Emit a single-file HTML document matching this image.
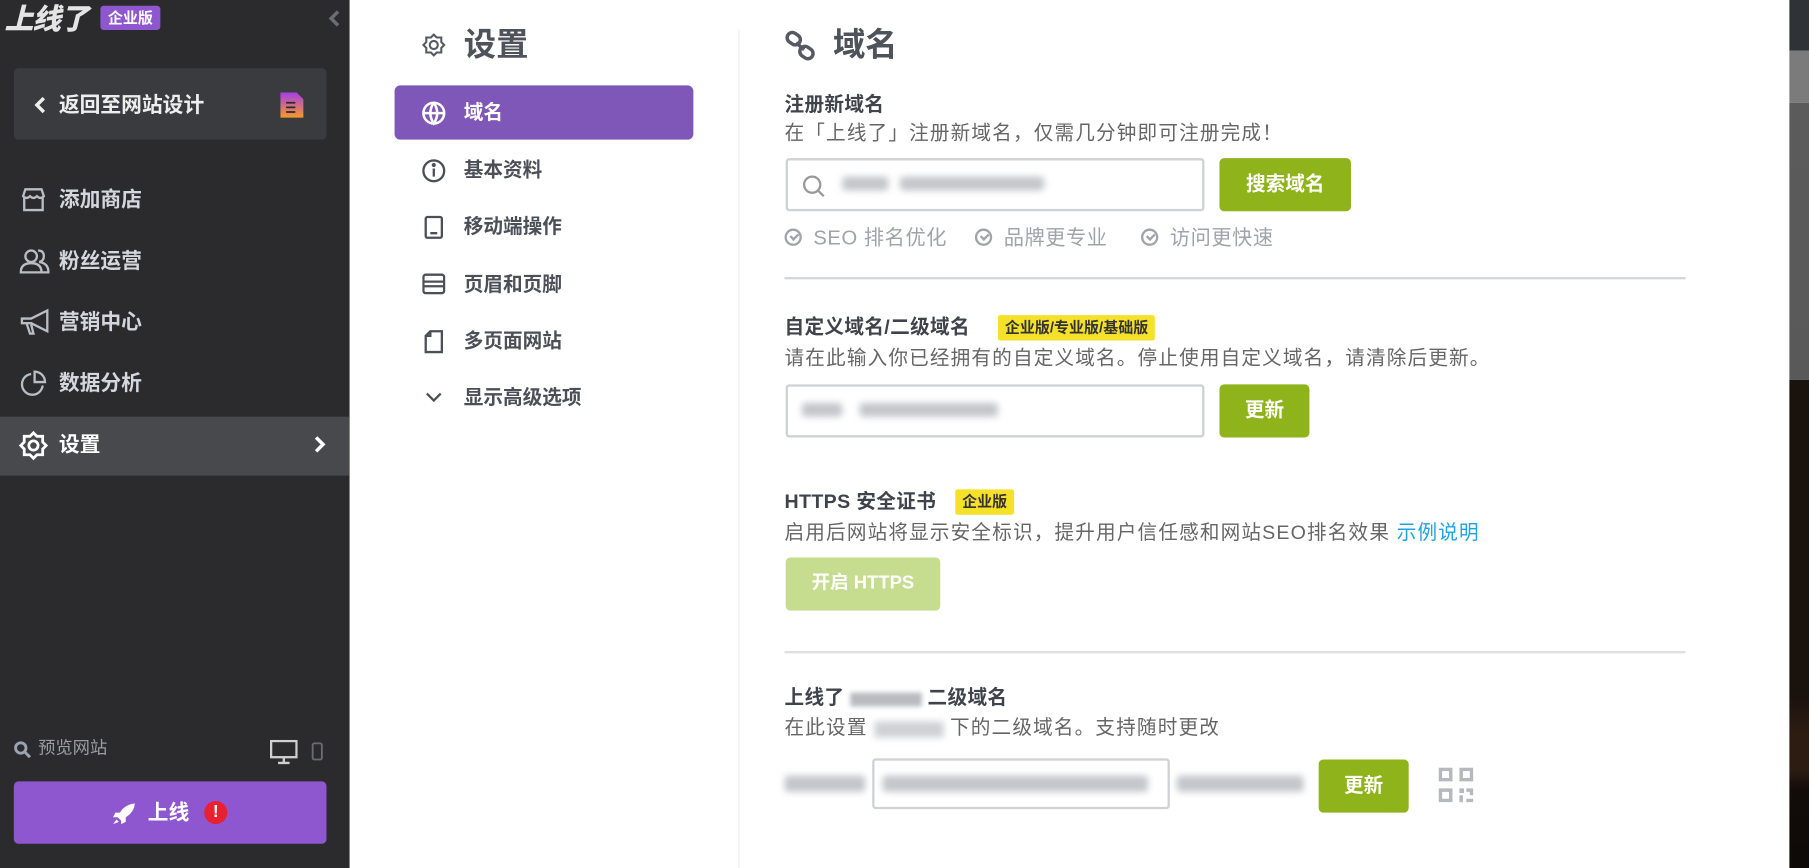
<!DOCTYPE html>
<html><head><meta charset="utf-8">
<style>
*{margin:0;padding:0;box-sizing:border-box}
html,body{width:1809px;height:868px;overflow:hidden;background:#fff}
#w{position:absolute;left:0;top:0;width:1568px;height:752px;transform:scale(1.15370,1.15426);transform-origin:0 0;font-family:"Liberation Sans","Noto Sans CJK SC",sans-serif;}
.a{position:absolute;white-space:nowrap}
.sb{position:absolute;left:0;top:0;width:303px;height:752px;background:#2b2b2d}
.mi{position:absolute;left:51px;font-size:18px;font-weight:bold;color:#d4d7de;line-height:20px}
.ic{position:absolute}
.nv{position:absolute;left:402px;font-size:17px;font-weight:bold;color:#4b5058;line-height:20px}
.h{position:absolute;left:680px;font-size:17px;font-weight:bold;color:#3f444c;line-height:20px;letter-spacing:0.3px}
.d{position:absolute;left:680px;font-size:17px;color:#666;line-height:20px;letter-spacing:1px}
.inp{position:absolute;border:2px solid #cfd1d4;border-radius:3px;background:#fff}
.btn{position:absolute;background:#8fb31b;border-radius:4px;color:#fff;font-weight:bold;font-size:17px;text-align:center}
.bl{position:absolute;background:#c4c6ca;filter:blur(3px);border-radius:3px}
.badge{position:absolute;background:#f5e12a;color:#333;font-weight:bold;font-size:13px;line-height:22px;height:22px;padding:0 6px;border-radius:2px}
.ck{position:absolute;top:197px;font-size:17.5px;color:#a0a3a8;line-height:18px;letter-spacing:0.5px}
.ck i{display:inline-block;width:15px;height:15px;border:2px solid #a0a3a8;border-radius:50%;margin-right:10px;vertical-align:-1px;position:relative}
.ck i:after{content:"";position:absolute;left:3px;top:2px;width:5px;height:3px;border-left:2px solid #a0a3a8;border-bottom:2px solid #a0a3a8;transform:rotate(-45deg)}
</style></head><body><div id="w">
<div class="sb"></div>
<div class="a" style="left:4px;top:2px;font-size:25px;font-weight:900;font-style:italic;color:#e4e4e4;line-height:30px;letter-spacing:-1px">上线了</div>
<div class="a" style="left:87px;top:5px;width:52px;height:21px;background:#8e57cf;border-radius:3px;color:#fff;font-size:13px;font-weight:bold;text-align:center;line-height:21px">企业版</div>
<svg class="ic" style="left:284px;top:8px" width="12" height="16"><path d="M9 2 L3 8 L9 14" stroke="#6b6d72" stroke-width="3" fill="none"/></svg>
<div class="a" style="left:12px;top:59px;width:271px;height:62px;background:#3a3b3e;border-radius:4px"></div>
<svg class="ic" style="left:29px;top:83px" width="12" height="16"><path d="M9 2 L3 8 L9 14" stroke="#eee" stroke-width="3" fill="none"/></svg>
<div class="mi" style="left:51px;top:81px;color:#eee">返回至网站设计</div>
<svg class="ic" style="left:243px;top:80px" width="20" height="22"><defs><linearGradient id="g" x1="0" y1="0" x2="0" y2="1"><stop offset="0" stop-color="#a43ee8"/><stop offset="1" stop-color="#f59a2a"/></linearGradient></defs><path d="M0 0 H14 L20 6 V22 H0Z" fill="url(#g)"/><path d="M5 9h8M5 13h8M5 17h8" stroke="#2b2b2d" stroke-width="1.5"/></svg>
<svg class="ic" style="left:17px;top:161px" width="24" height="24" fill="none" stroke="#b9bec6" stroke-width="2"><path d="M3 9 L5 3 H19 L21 9 Q18 12 15 9 Q12 12 9 9 Q6 12 3 9Z M4 10 V21 H20 V10"/></svg>
<div class="mi" style="top:163px">添加商店</div>
<svg class="ic" style="left:17px;top:214px" width="26" height="24" fill="none" stroke="#b9bec6" stroke-width="2"><circle cx="10" cy="8" r="5"/><path d="M1 22 Q1 14 10 14 Q19 14 19 22Z M16 3 Q21 3 21 8 Q21 12 17 13 Q25 14 25 22 H20"/></svg>
<div class="mi" style="top:216px">粉丝运营</div>
<svg class="ic" style="left:17px;top:267px" width="26" height="24" fill="none" stroke="#b9bec6" stroke-width="2"><path d="M2 9 H10 L24 2 V20 L10 13 H2Z M6 13 L9 22 H12 L10 14"/></svg>
<div class="mi" style="top:269px">营销中心</div>
<svg class="ic" style="left:17px;top:320px" width="24" height="24" fill="none" stroke="#b9bec6" stroke-width="2"><path d="M10 4 A9 9 0 1 0 20 14"/><path d="M13 2 A9 9 0 0 1 22 11 H13Z"/></svg>
<div class="mi" style="top:322px">数据分析</div>
<div class="a" style="left:0;top:361px;width:303px;height:51px;background:#48494d"></div>
<svg class="ic" style="left:16px;top:373px" width="26" height="26" fill="none" stroke="#fff" stroke-width="2.4"><path d="M13 2 L16 5 H21 V10 L24 13 L21 16 V21 H16 L13 24 L10 21 H5 V16 L2 13 L5 10 V5 H10Z"/><circle cx="13" cy="13" r="4"/></svg>
<div class="mi" style="top:375px;color:#fff">设置</div>
<svg class="ic" style="left:271px;top:377px" width="12" height="16"><path d="M3 2 L9 8 L3 14" stroke="#fff" stroke-width="3" fill="none"/></svg>
<svg class="ic" style="left:12px;top:642px" width="15" height="15" fill="none" stroke="#9aa4b2" stroke-width="2.5"><circle cx="6" cy="6" r="4.5"/><path d="M9.5 9.5 L14 14"/></svg>
<div class="a" style="left:33px;top:640px;font-size:15px;color:#9a9ca2;line-height:18px">预览网站</div>
<svg class="ic" style="left:234px;top:641px" width="24" height="22" fill="none" stroke="#d0d0d0" stroke-width="2"><rect x="1" y="1" width="22" height="14"/><path d="M12 15 V19 M7 20 H17"/></svg>
<svg class="ic" style="left:270px;top:643px" width="10" height="16" fill="none" stroke="#6a6c72" stroke-width="1.6"><rect x="1" y="1" width="8" height="14" rx="1.5"/></svg>
<div class="a" style="left:12px;top:677px;width:271px;height:54px;background:#8e57cf;border-radius:4px"></div>
<svg class="ic" style="left:98px;top:696px" width="20" height="18"><path d="M19 0 Q10 1 6 8 L2 8 L0 12 L4 12 L7 15 L7 18 L11 16 L11 12 Q18 8 19 0Z M3 14 L0 18 L5 16Z" fill="#fff"/></svg>
<div class="a" style="left:128px;top:693px;font-size:18px;font-weight:bold;color:#fff;line-height:22px">上线</div>
<div class="a" style="left:177px;top:694px;width:20px;height:20px;border-radius:50%;background:#e8202f;color:#fff;font-weight:bold;font-size:15px;text-align:center;line-height:20px">!</div>
<svg class="ic" style="left:365px;top:28px" width="22" height="22" fill="none" stroke="#555a62" stroke-width="1.8"><path d="M11 2 L13.5 4.5 H17.5 V8.5 L20 11 L17.5 13.5 V17.5 H13.5 L11 20 L8.5 17.5 H4.5 V13.5 L2 11 L4.5 8.5 V4.5 H8.5Z"/><circle cx="11" cy="11" r="3.5"/></svg>
<div class="a" style="left:402px;top:22px;font-size:28px;font-weight:bold;color:#4e535b;line-height:34px">设置</div>
<div class="a" style="left:342px;top:74px;width:259px;height:47px;background:#7e57b8;border-radius:5px"></div>
<svg class="ic" style="left:365px;top:87px" width="22" height="22" fill="none" stroke="#fff" stroke-width="2.2"><circle cx="11" cy="11" r="9"/><path d="M2 11 H20 M11 2 Q5 11 11 20 Q17 11 11 2"/></svg>
<div class="nv" style="top:88px;color:#fff">域名</div>
<svg class="ic" style="left:365px;top:137px" width="22" height="22" fill="none" stroke="#4b5058" stroke-width="2"><circle cx="11" cy="11" r="9"/><path d="M11 9 V16"/><circle cx="11" cy="6" r="0.8" fill="#4b5058"/></svg>
<div class="nv" style="top:138px">基本资料</div>
<svg class="ic" style="left:367px;top:186px" width="18" height="22" fill="none" stroke="#4b5058" stroke-width="2"><rect x="2" y="2" width="14" height="18" rx="1.5"/><path d="M6 16 H12"/></svg>
<div class="nv" style="top:187px">移动端操作</div>
<svg class="ic" style="left:366px;top:237px" width="20" height="18" fill="none" stroke="#4b5058" stroke-width="2"><rect x="1" y="1" width="18" height="16" rx="2"/><path d="M1 7 H19 M1 11 H19"/></svg>
<div class="nv" style="top:237px">页眉和页脚</div>
<svg class="ic" style="left:367px;top:285px" width="18" height="22" fill="none" stroke="#4b5058" stroke-width="2"><path d="M6 2 H16 V20 H2 V6Z M6 2 V6 H2"/></svg>
<div class="nv" style="top:286px">多页面网站</div>
<svg class="ic" style="left:368px;top:338px" width="16" height="12" fill="none" stroke="#4b5058" stroke-width="2"><path d="M2 3 L8 9 L14 3"/></svg>
<div class="nv" style="top:335px">显示高级选项</div>
<div class="a" style="left:640px;top:25px;width:1px;height:727px;background:#ececec"></div>
<svg class="ic" style="left:680px;top:26px" width="28" height="28" fill="none" stroke="#555a62" stroke-width="3"><rect x="2" y="3" width="12" height="9" rx="4.5" transform="rotate(35 8 7.5)"/><rect x="13" y="15" width="12" height="9" rx="4.5" transform="rotate(35 19 19.5)"/><path d="M10 11 L17 17"/></svg>
<div class="a" style="left:722px;top:22px;font-size:28px;font-weight:bold;color:#4e535b;line-height:34px">域名</div>
<div class="h" style="top:81px">注册新域名</div>
<div class="d" style="top:106px">在「上线了」注册新域名，仅需几分钟即可注册完成！</div>
<div class="inp" style="left:681px;top:137px;width:363px;height:46px"></div>
<svg class="ic" style="left:695px;top:151px" width="22" height="22" fill="none" stroke="#999" stroke-width="2"><circle cx="9" cy="9" r="7"/><path d="M14 14 L19 19"/></svg>
<div class="bl" style="left:730px;top:153px;width:40px;height:12px"></div>
<div class="bl" style="left:780px;top:153px;width:125px;height:12px"></div>
<div class="btn" style="left:1057px;top:137px;width:114px;height:46px;line-height:46px">搜索域名</div>
<div class="ck" style="left:680px"><i></i>SEO 排名优化</div>
<div class="ck" style="left:845px"><i></i>品牌更专业</div>
<div class="ck" style="left:989px"><i></i>访问更快速</div>
<div class="a" style="left:680px;top:240px;width:781px;height:2px;background:#d4d6d9"></div>
<div class="h" style="top:274px">自定义域名/二级域名</div>
<div class="badge" style="left:865px;top:273px">企业版/专业版/基础版</div>
<div class="d" style="top:301px">请在此输入你已经拥有的自定义域名。停止使用自定义域名，请清除后更新。</div>
<div class="inp" style="left:681px;top:333px;width:363px;height:46px"></div>
<div class="bl" style="left:695px;top:349px;width:35px;height:12px"></div>
<div class="bl" style="left:745px;top:349px;width:120px;height:12px"></div>
<div class="btn" style="left:1057px;top:333px;width:78px;height:46px;line-height:46px">更新</div>
<div class="h" style="top:425px">HTTPS 安全证书</div>
<div class="badge" style="left:828px;top:424px">企业版</div>
<div class="d" style="top:452px">启用后网站将显示安全标识，提升用户信任感和网站SEO排名效果 <span style="color:#1ea4e0">示例说明</span></div>
<div class="btn" style="left:681px;top:483px;width:134px;height:46px;line-height:46px;background:#c6dd8f;font-size:16px">开启 HTTPS</div>
<div class="a" style="left:680px;top:564px;width:781px;height:2px;background:#dcdee1"></div>
<div class="h" style="top:595px">上线了 <span style="display:inline-block;width:62px;height:12px;background:#b8bbc0;filter:blur(2px);vertical-align:middle"></span> 二级域名</div>
<div class="d" style="top:621px">在此设置 <span style="display:inline-block;width:60px;height:14px;background:#cfd1d5;filter:blur(3px);vertical-align:middle"></span> 下的二级域名。支持随时更改</div>
<div class="bl" style="left:680px;top:672px;width:70px;height:14px"></div>
<div class="inp" style="left:756px;top:657px;width:258px;height:44px"></div>
<div class="bl" style="left:765px;top:672px;width:230px;height:14px"></div>
<div class="bl" style="left:1020px;top:672px;width:110px;height:14px"></div>
<div class="btn" style="left:1143px;top:658px;width:78px;height:46px;line-height:46px">更新</div>
<svg class="ic" style="left:1247px;top:665px" width="30" height="30" fill="#b5b8bd"><path d="M0 0h12v12H0z M3 3v6h6V3z M18 0h12v12H18z M21 3v6h6V3z M0 18h12v12H0z M3 21v6h6v-6z M18 18h4v4h-4z M24 18h6v6h-3v-3h-3z M18 24h3v6h-3z M24 27h6v3h-6z"/></svg>
<div class="a" style="left:1551px;top:0;width:17px;height:44px;background:#2f3236"></div>
<div class="a" style="left:1551px;top:44px;width:17px;height:45px;background:#7b7b7b"></div>
<div class="a" style="left:1551px;top:89px;width:17px;height:240px;background:linear-gradient(#5b5b5b,#595959)"></div>
<div class="a" style="left:1551px;top:329px;width:17px;height:423px;background:linear-gradient(#1a120d 0%,#1a120d 65%,#2c1c12 72%,#2c1c12 80%,#120c09 84%,#0e0a08 100%)"></div>
</div></body></html>
